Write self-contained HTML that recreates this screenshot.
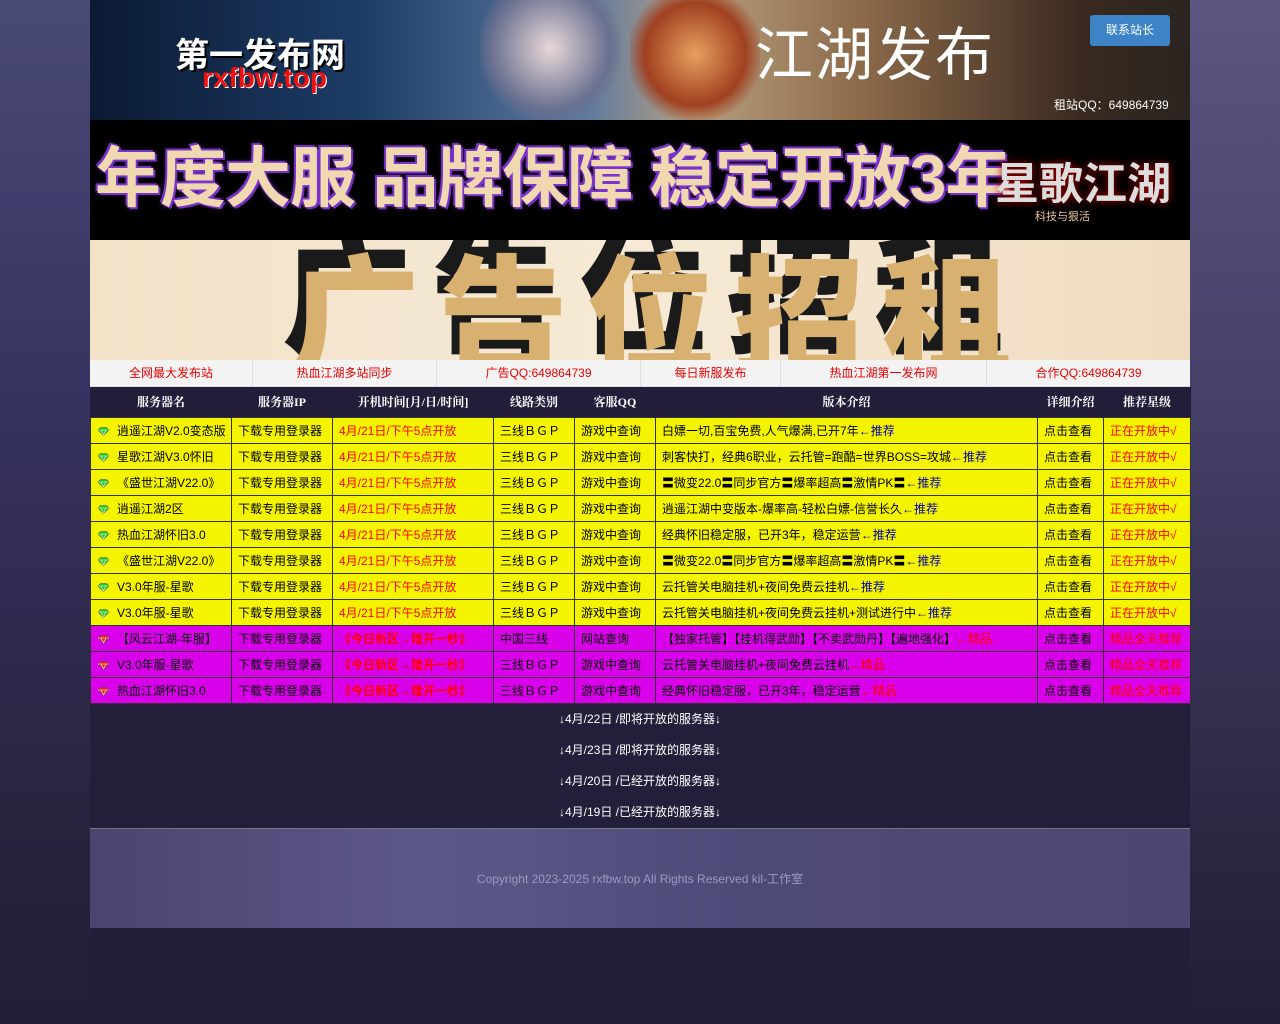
<!DOCTYPE html>
<html><head><meta charset="utf-8"><style>
*{margin:0;padding:0;box-sizing:border-box}
body{width:1280px;height:1024px;background:#221e38;font-family:"Liberation Sans","Noto Sans CJK SC",sans-serif;font-size:12px;overflow:hidden;position:relative}
.bgl{position:absolute;left:0;top:0;width:90px;height:1024px;background:linear-gradient(180deg,#4a4a76 0%,#363260 40%,#28243f 80%,#221e38 100%)}
.bgr{position:absolute;right:0;top:0;width:90px;height:1024px;background:linear-gradient(180deg,#5a5680 0%,#444068 40%,#2c2844 80%,#221e38 100%)}
.wrap{position:absolute;left:90px;top:0;width:1100px}
.b1{height:120px;position:relative;background:linear-gradient(90deg,#0c1a33 0%,#1d3c66 25%,#5d7aa0 45%,#b7a080 55%,#8c6a4a 70%,#3a2a20 90%,#2a2420 100%);overflow:hidden}
.b2{height:120px;background:#000;position:relative;overflow:hidden}
.b3{height:120px;background:linear-gradient(90deg,#f2e2c8,#f6ead6 50%,#efdcc0);position:relative;overflow:hidden}
.nav{height:27px;background:#f3f3f3;display:flex;border-bottom:1px solid #ddd}
.nav div{color:#e00;text-align:center;line-height:26px;border-right:1px solid #ddd}
table{border-collapse:collapse;table-layout:fixed;width:1100px}
th{background:#231d3a;color:#fff;height:30px;font-family:"Liberation Serif","Noto Serif CJK SC",serif;font-weight:bold;font-size:12px}
td{height:26px;border:1px solid #333;padding-left:6px;white-space:nowrap;overflow:hidden;color:#000}
tr.y td{background:#f4f400}
tr.m td{background:#d900ea}
.r{color:#f00}.b{color:#00a}
.gem{display:inline-block;width:13px;height:9px;margin-right:7px;vertical-align:-1px}
.info p{color:#fff;text-align:center;height:31px;line-height:31px;font-size:12px}
.foot{height:100px;background:linear-gradient(90deg,#4a4470,#5c5888 30%,#4e4a78 60%,#4c4672);border-top:1px solid #777;color:#9c9ac0;text-align:center;line-height:100px;font-size:12px}
</style></head><body>
<div class="bgl"></div><div class="bgr"></div>
<div class="wrap">
<div class="b1">
<div style="position:absolute;left:85px;top:28px;color:#fff;font-size:34px;font-weight:bold;text-shadow:2px 2px 0 #000">第一发布网</div>
<div style="position:absolute;left:112px;top:62px;color:#e11;font-size:28px;font-weight:bold;text-shadow:1px 1px 0 #fff">rxfbw.top</div>
<div style="position:absolute;left:390px;top:0;width:140px;height:120px;background:radial-gradient(ellipse at 50% 40%,#e8d8d8,#6a7090 60%,transparent 75%)"></div>
<div style="position:absolute;left:540px;top:0;width:130px;height:120px;background:radial-gradient(ellipse at 50% 45%,#e8a060,#a04020 55%,transparent 75%)"></div>
<div style="position:absolute;left:665px;top:8px;color:#fff;font-size:58px;letter-spacing:2px">江湖发布</div>
<div style="position:absolute;left:1000px;top:15px;width:80px;height:31px;background:#3c84c6;color:#fff;text-align:center;line-height:31px;border-radius:3px">联系站长</div>
<div style="position:absolute;left:964px;top:96px;color:#fff;font-size:12px">租站QQ：649864739</div>
</div>
<div class="b2">
<div style="position:absolute;left:5px;top:18px;color:#f0d8b0;font-size:66px;line-height:80px;font-weight:bold;letter-spacing:-1px;text-shadow:0 0 4px #8a3ad8,2px 2px 0 #7030c0,-2px -2px 0 #7030c0;white-space:nowrap">年度大服 品牌保障 稳定开放3年</div>
<div style="position:absolute;left:905px;top:28px;color:#ddd;font-size:44px;font-weight:bold;text-shadow:0 0 8px #a00;white-space:nowrap">星歌江湖</div>
<div style="position:absolute;left:945px;top:88px;color:#e8c8a0;font-size:11px">科技与狠活</div>
</div>
<div class="b3">
<div style="position:absolute;left:200px;top:14px;color:#d8b070;font-size:130px;font-weight:900;letter-spacing:18px;text-shadow:-8px -22px 0 #1a1a1a;white-space:nowrap;line-height:130px">广告位招租</div>
</div>
<div class="nav">
<div style="width:163px">全网最大发布站</div><div style="width:184px">热血江湖多站同步</div><div style="width:204px">广告QQ:649864739</div><div style="width:140px">每日新服发布</div><div style="width:206px">热血江湖第一发布网</div><div style="width:203px;border:none">合作QQ:649864739</div>
</div>
<table>
<colgroup><col style="width:141px"><col style="width:101px"><col style="width:161px"><col style="width:81px"><col style="width:81px"><col style="width:382px"><col style="width:66px"><col style="width:87px"></colgroup>
<tr><th>服务器名</th><th>服务器IP</th><th>开机时间[月/日/时间]</th><th>线路类别</th><th>客服QQ</th><th>版本介绍</th><th>详细介绍</th><th>推荐星级</th></tr>
<tbody id="tb"></tbody>
</table>
<div class="info" style="background:#231e3a"><p>↓4月/22日 /即将开放的服务器↓</p><p>↓4月/23日 /即将开放的服务器↓</p><p>↓4月/20日 /已经开放的服务器↓</p><p>↓4月/19日 /已经开放的服务器↓</p></div>
<div class="foot">Copyright 2023-2025 rxfbw.top All Rights Reserved kil-工作室</div>
</div>
<script>
var g='<svg class="gem" viewBox="0 0 13 9"><path d="M1 3L3.5 0.5H9.5L12 3L6.5 8.5Z" fill="C" stroke="#555" stroke-width="0.6"/><path d="M1 3H12M4 3L6.5 8M9 3L6.5 8" stroke="#fff" stroke-width="0.6" fill="none"/></svg>';
var Y=[["逍遥江湖V2.0变态版","白嫖一切,百宝免费,人气爆满,已开7年"],["星歌江湖V3.0怀旧","刺客快打，经典6职业，云托管=跑酷=世界BOSS=攻城"],["《盛世江湖V22.0》","〓微变22.0〓同步官方〓爆率超高〓激情PK〓"],["逍遥江湖2区","逍遥江湖中变版本-爆率高-轻松白嫖-信誉长久"],["热血江湖怀旧3.0","经典怀旧稳定服，已开3年，稳定运营"],["《盛世江湖V22.0》","〓微变22.0〓同步官方〓爆率超高〓激情PK〓"],["V3.0年服-星歌","云托管关电脑挂机+夜间免费云挂机"],["V3.0年服-星歌","云托管关电脑挂机+夜间免费云挂机+测试进行中"]];
var M=[["【风云江湖-年服】","中国三线","网站查询","【独家托管】【挂机得武勋】【不卖武勋丹】【遍地强化】"],["V3.0年服-星歌","三线ＢＧＰ","游戏中查询","云托管关电脑挂机+夜间免费云挂机"],["热血江湖怀旧3.0","三线ＢＧＰ","游戏中查询","经典怀旧稳定服，已开3年，稳定运营"]];
var h='';
Y.forEach(function(r){h+='<tr class="y"><td>'+g.replace('C','#2c2')+r[0]+'</td><td>下载专用登录器</td><td class="r">4月/21日/下午5点开放</td><td>三线ＢＧＰ</td><td>游戏中查询</td><td>'+r[1]+'<span class="b">←推荐</span></td><td>点击查看</td><td class="r">正在开放中√</td></tr>'});
M.forEach(function(r){h+='<tr class="m"><td>'+g.replace('C','#e22')+r[0]+'</td><td>下载专用登录器</td><td class="r" style="font-weight:bold">《今日新区→隆开一秒》</td><td>'+r[1]+'</td><td>'+r[2]+'</td><td>'+r[3]+'<span class="r">←精品</span></td><td>点击查看</td><td class="r">精品全天推荐</td></tr>'});
document.getElementById('tb').innerHTML=h;
</script>
</body></html>
